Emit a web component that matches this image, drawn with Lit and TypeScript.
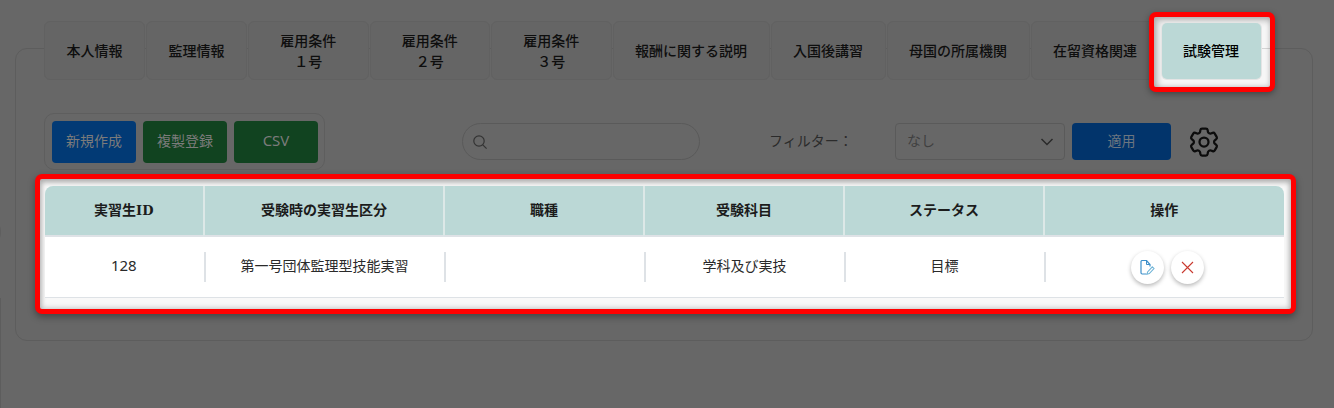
import { LitElement, html, css } from "lit";
import { customElement } from "lit/decorators.js";

const TABS: { label: string; wide?: boolean }[] = [
  { label: "本人情報" },
  { label: "監理情報" },
  { label: "雇用条件\n１号", wide: true },
  { label: "雇用条件\n２号", wide: true },
  { label: "雇用条件\n３号", wide: true },
  { label: "報酬に関する説明" },
  { label: "入国後講習" },
  { label: "母国の所属機関" },
  { label: "在留資格関連" },
];

@customElement("app-root")
export class AppRoot extends LitElement {
  static styles = css`
    :host {
      display: block;
      position: relative;
      min-height: 408px;
      background: #676767;
      font-family: "Noto Sans CJK JP", "Noto Sans", sans-serif;
      font-size: 14px;
      color: #111;
      overflow: hidden;
    }
    :host::before {
      content: "";
      position: absolute;
      left: 0;
      top: 298px;
      bottom: 0;
      width: 1px;
      background: #5d5d5d;
    }
    :host::after {
      content: "";
      position: absolute;
      left: -9px;
      top: 222px;
      width: 10px;
      height: 20px;
      border-radius: 50%;
      background: #5f5f5f;
    }
    .panel {
      margin: 0 21px 0 15px;
      position: relative;
      top: 48px;
      height: 293px;
      box-sizing: border-box;
      border: 1px solid #5d5d5d;
      border-radius: 12px;
    }
    .tabs {
      display: flex;
      gap: 1px;
      margin: -28px 0 0 28px;
      height: 59px;
    }
    .tab {
      box-sizing: border-box;
      height: 59px;
      padding: 0 21.5px;
      display: flex;
      align-items: center;
      justify-content: center;
      text-align: center;
      white-space: pre-line;
      line-height: 21px;
      font-weight: 500;
      background: #656565;
      border: 1px solid #616161;
      border-radius: 6px;
      color: #0e0e0e;
    }
    .tab.wide {
      width: 120.5px;
      padding: 0;
    }
    .tab.active {
      position: relative;
      isolation: isolate;
      background: transparent;
      border-color: transparent;
      color: #000;
    }
    .tab.active::before {
      content: "";
      position: absolute;
      z-index: -2;
      top: -10px;
      bottom: -13px;
      left: -13px;
      right: -14px;
      border: 5px solid #ff0000;
      border-radius: 7px;
      background: linear-gradient(#d4d4d4, #d4d4d4) no-repeat 100% 31px / 14px 1px, #f6f6f6;
      box-shadow: 0 2px 6px rgba(0, 0, 0, 0.35), inset 3px 3px 6px 1px rgba(0, 0, 0, 0.22),
        inset 0 0 4px 1px rgba(0, 0, 0, 0.12);
    }
    .tab.active::after {
      content: "";
      position: absolute;
      z-index: -1;
      inset: 1px 0 0 0.5px;
      background: #bbd8d6;
      border-radius: 5px;
      box-shadow: 0 0 0 1px #e4e4e4;
    }
    .toolbar {
      display: flex;
      align-items: center;
      margin: 33px 0 0 28px;
      height: 57px;
    }
    .group {
      box-sizing: border-box;
      width: 281px;
      height: 57px;
      display: flex;
      flex: none;
      gap: 7px;
      align-items: center;
      padding: 0 0 0 7px;
      border: 1px solid #5e5e5e;
      border-radius: 10px;
    }
    .btn {
      box-sizing: border-box;
      width: 84px;
      height: 42px;
      flex: none;
      display: flex;
      align-items: center;
      justify-content: center;
      padding-bottom: 3px;
      border-radius: 4px;
      color: #7b7b7b;
    }
    .blue {
      background: #023a75;
    }
    .green {
      background: #114320;
    }
    .latin {
      font-family: "Noto Sans", sans-serif;
      font-size: 15px;
    }
    th .latin {
      font-family: "DejaVu Serif", serif;
      font-size: 13px;
    }
    .search {
      box-sizing: border-box;
      margin-left: 137px;
      width: 238px;
      height: 37px;
      display: flex;
      align-items: center;
      padding-left: 9px;
      border: 1px solid #5a5a5a;
      border-radius: 19px;
      color: #333;
    }
    .filter {
      margin-left: 69px;
      width: 79px;
      padding-bottom: 3px;
      color: #2b2b2b;
      white-space: nowrap;
    }
    .select {
      box-sizing: border-box;
      margin-left: 47px;
      width: 170px;
      height: 37px;
      display: flex;
      align-items: center;
      justify-content: space-between;
      padding: 0 10px 0 11px;
      border: 1px solid #5a5a5a;
      border-radius: 4px;
      color: #404040;
    }
    .select span {
      padding-bottom: 3px;
    }
    .apply {
      box-sizing: border-box;
      margin-left: 7px;
      width: 99px;
      height: 37px;
      display: flex;
      align-items: center;
      justify-content: center;
      padding-bottom: 3px;
      border-radius: 4px;
      background: #02346b;
      color: #6c7680;
    }
    .gear {
      margin-left: 15px;
      color: #0c0c0c;
    }
    .frame {
      box-sizing: border-box;
      margin: 4px 0 0 18.5px;
      width: 1261.5px;
      height: 140px;
      padding: 7px 6px 0 5px;
      border: 5px solid #ff0000;
      border-radius: 7px;
      background: #f8f8f8;
      box-shadow: 0 3px 7px rgba(0, 0, 0, 0.35), inset 0 3px 5px 1px rgba(0, 0, 0, 0.2),
        inset 0 0 5px 2px rgba(0, 0, 0, 0.13);
    }
    table {
      width: 1239px;
      table-layout: fixed;
      border-collapse: separate;
      border-spacing: 0;
    }
    th {
      height: 49px;
      padding: 0 0 4px;
      box-sizing: border-box;
      background: #bbd8d6;
      border-bottom: 2px solid #dee2e6;
      font-weight: 700;
      color: #1c1c1c;
    }
    thead tr {
      height: 51px;
    }
    th + th {
      border-left: 2px solid #dce8e7;
    }
    th:first-child {
      border-top-left-radius: 8px;
    }
    th:last-child {
      border-top-right-radius: 8px;
    }
    td {
      height: 60px;
      padding: 0;
      background: #fff;
      border-bottom: 1px solid #dee2e6;
      color: #2a2a2a;
    }
    .cell {
      height: 30px;
      box-sizing: border-box;
      padding-bottom: 5px;
      display: flex;
      align-items: center;
      justify-content: center;
    }
    td + td .cell {
      border-left: 2px solid #dee2e6;
      margin-left: 1px;
    }
    .cell.actions {
      gap: 7px;
      padding: 0 0 0 6px;
    }
    .round {
      width: 33px;
      height: 33px;
      flex: none;
      border-radius: 50%;
      background: #fff;
      display: flex;
      align-items: center;
      justify-content: center;
      box-shadow: 0 2px 4px rgba(0, 0, 0, 0.28);
    }
    svg {
      display: block;
      flex: none;
    }
  `;

  render() {
    return html`
      <div class="panel">
        <div class="tabs">
          ${TABS.map(
            (t) => html`<div class="tab ${t.wide ? "wide" : ""}">${t.label}</div>`
          )}
          <div class="tab active">試験管理</div>
        </div>
        <div class="toolbar">
          <div class="group">
            <div class="btn blue">新規作成</div>
            <div class="btn green">複製登録</div>
            <div class="btn green"><span class="latin">CSV</span></div>
          </div>
          <div class="search">
            <svg width="16" height="16" viewBox="0 0 16 16" fill="none" stroke="currentColor" stroke-width="1.2">
              <circle cx="7" cy="7" r="5.2"></circle>
              <path d="M10.8 10.8 14.6 14.6"></path>
            </svg>
          </div>
          <div class="filter">フィルター：</div>
          <div class="select">
            <span>なし</span>
            <svg width="14" height="8" viewBox="0 0 14 8" fill="none" stroke="#2a2a2a" stroke-width="1.5">
              <path d="M1.5 1 7 6.5 12.5 1"></path>
            </svg>
          </div>
          <div class="apply">適用</div>
          <svg class="gear" width="36" height="36" viewBox="0 0 24 24" fill="none" stroke="currentColor" stroke-width="1.5">
            <path d="M9.594 3.94c.09-.542.56-.94 1.11-.94h2.593c.55 0 1.02.398 1.11.94l.213 1.281c.063.374.313.686.645.87.074.04.147.083.22.127.325.196.72.257 1.075.124l1.217-.456a1.125 1.125 0 0 1 1.37.49l1.296 2.247a1.125 1.125 0 0 1-.26 1.431l-1.003.827c-.293.241-.438.613-.43.992a7.723 7.723 0 0 1 0 .255c-.008.378.137.75.43.991l1.004.827c.424.35.534.955.26 1.43l-1.298 2.247a1.125 1.125 0 0 1-1.369.491l-1.217-.456c-.355-.133-.75-.072-1.076.124a6.47 6.47 0 0 1-.22.128c-.331.183-.581.495-.644.869l-.213 1.281c-.09.543-.56.94-1.11.94h-2.594c-.55 0-1.019-.398-1.11-.94l-.213-1.281c-.062-.374-.312-.686-.644-.87a6.52 6.52 0 0 1-.22-.127c-.325-.196-.72-.257-1.076-.124l-1.217.456a1.125 1.125 0 0 1-1.369-.49l-1.297-2.247a1.125 1.125 0 0 1 .26-1.431l1.004-.827c.292-.24.437-.613.43-.991a6.932 6.932 0 0 1 0-.255c.007-.38-.138-.751-.43-.992l-1.004-.827a1.125 1.125 0 0 1-.26-1.43l1.297-2.247a1.125 1.125 0 0 1 1.37-.491l1.216.456c.356.133.751.072 1.076-.124.072-.044.146-.086.22-.128.332-.183.582-.495.644-.869l.214-1.28Z"></path>
            <circle cx="12" cy="12" r="3"></circle>
          </svg>
        </div>
        <div class="frame">
          <table>
            <colgroup>
              <col style="width:158.5px" /><col style="width:240px" /><col style="width:200px" />
              <col style="width:200px" /><col style="width:200px" /><col style="width:240.5px" />
            </colgroup>
            <thead>
              <tr>
                <th>実習生<span class="latin">ID</span></th>
                <th>受験時の実習生区分</th>
                <th>職種</th>
                <th>受験科目</th>
                <th>ステータス</th>
                <th>操作</th>
              </tr>
            </thead>
            <tbody>
              <tr>
                <td><div class="cell"><span class="latin">128</span></div></td>
                <td><div class="cell">第一号団体監理型技能実習</div></td>
                <td><div class="cell"></div></td>
                <td><div class="cell">学科及び実技</div></td>
                <td><div class="cell">目標</div></td>
                <td>
                  <div class="cell actions">
                    <div class="round">
                      <svg width="15" height="15" viewBox="0 0 15 15" fill="none">
                        <path d="M6.5 14H2.2A1.2 1.2 0 0 1 1 12.8V1.7A1.2 1.2 0 0 1 2.2.5H6.5L10 4.5V6.5" stroke="#3d8fca" stroke-width="1.2"></path>
                        <path d="M6.5.5V4.5H10" stroke="#3d8fca" stroke-width="1"></path>
                        <path d="M12.3 6.8 14 8.5 9.3 13.6 7 14.2 7.6 11.9Z" stroke="#6db3d6" stroke-width="1.1"></path>
                      </svg>
                    </div>
                    <div class="round">
                      <svg width="13" height="13" viewBox="0 0 13 13" fill="none" stroke="#c9392f" stroke-width="1.1">
                        <path d="M1 1 12 12M12 1 1 12"></path>
                      </svg>
                    </div>
                  </div>
                </td>
              </tr>
            </tbody>
          </table>
        </div>
      </div>
    `;
  }
}
